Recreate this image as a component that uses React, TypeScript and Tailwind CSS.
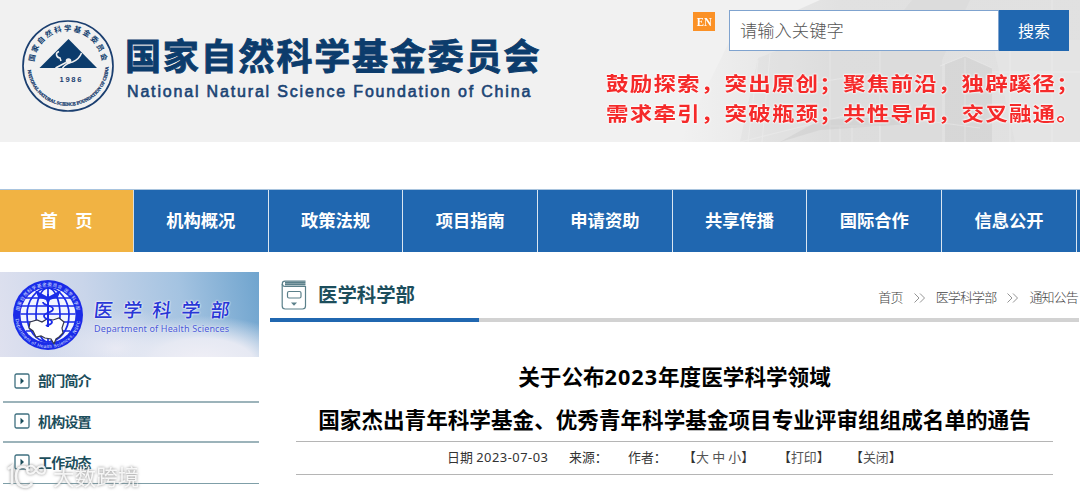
const navItems = ["机构概况", "政策法规", "项目指南", "申请资助", "共享传播", "国际合作", "信息公开"]

const sideItems = ["部门简介", "机构设置", "工作动态"]

const slogans = [
  "鼓励探索，突出原创；聚焦前沿，独辟蹊径；",
  "需求牵引，突破瓶颈；共性导向，交叉融通。",
]

function Emblem() {
  return (
    <svg className="w-[94px] h-[94px] shrink-0 overflow-visible" viewBox="0 0 94 94" fill="none">
      <defs>
        <path id="emblem-top" d="M13 46A34 34 0 0 1 81 46" />
        <path id="emblem-bottom" d="M6.500 49A40.600 40.600 0 0 0 87.500 49" />
      </defs>
      <circle cx="47" cy="47" r="45" stroke="#1b3f70" strokeWidth="1.700" />
      <text fontSize="7.400" fontWeight="700" fill="#0f3d6e" className="font-['Noto_Sans_CJK_SC',sans-serif]">
        <textPath href="#emblem-top" startOffset="3" textLength="100">国家自然科学基金委员会</textPath>
      </text>
      <text
        fontSize="4.600"
        fontWeight="700"
        fill="#1b3f70"
        stroke="#1b3f70"
        strokeWidth=".3"
        className="font-['Liberation_Serif',serif]"
      >
        <textPath href="#emblem-bottom" startOffset="2" textLength="121">
          NATIONAL NATURAL SCIENCE FOUNDATION OF CHINA
        </textPath>
      </text>
      <path d="M47.500 20 76 49H18.500z" fill="#0c3c6c" />
      <path
        d="M38 32.500q-3 1-2.500 3.500t3.500 3l1 3M60.500 34q-2 6-9 9-6 1-10 6M45 43.500 34.500 49"
        stroke="#f1f1f1"
        strokeWidth="1.500"
      />
      <circle cx="47.500" cy="42" r="2.800" fill="#f1f1f1" />
      <text
        x="38.500"
        y="62.500"
        fontSize="7.600"
        fontWeight="700"
        fill="#1b3f70"
        textLength="22"
        className="font-['Liberation_Sans',sans-serif]"
      >
        1986
      </text>
    </svg>
  )
}

function HealthEmblem() {
  return (
    <svg className="w-[72px] h-[72px] shrink-0" viewBox="0 0 72 72" fill="none">
      <defs>
        <path id="health-top" d="M7.300 32A29 29 0 0 1 64.700 32" />
        <path id="health-bottom" d="M3.500 40A32.700 32.700 0 0 0 68.500 40" />
      </defs>
      <circle cx="36" cy="36" r="35" fill="#1a2be8" />
      <circle cx="36" cy="36" r="27.500" fill="#f2f5ff" />
      <g stroke="#1a2be8" strokeWidth="1.700">
        <path d="M14 19H58M9 27H63M8.500 35H63.500M9 43H63M14 52H58M36 8V64" />
        <ellipse cx="36" cy="36" rx="12" ry="27" />
        <ellipse cx="36" cy="36" rx="21" ry="27" />
      </g>
      <path d="M36 18 23 11l3 7 8 3 2 5 2-5 8-3 3-7z" fill="#1a2be8" />
      <path
        d="M18 43l7-2 5 2 5-3 6 1 6-2 5 4-2 6 1 5-4 4-3 2-2 5-3-5-6-1-4-2-5 1-3-6-4-3z"
        fill="#fff"
        stroke="#34384a"
        strokeWidth="1.200"
      />
      <path d="M36 15V48" stroke="#1a2be8" strokeWidth="2" />
      <path
        d="M31 23c0 4 10 3 10 7s-9 3-9 7 8 3 8 6-5 3-6 4"
        stroke="#1a2be8"
        strokeWidth="1.800"
      />
      <text fontSize="4.500" fill="#dfe3ff" className="font-['Noto_Sans_CJK_SC',sans-serif]">
        <textPath href="#health-top" textLength="82">国家自然科学基金委员会 医学科学部</textPath>
      </text>
      <text fontSize="4.600" fill="#dfe3ff" className="font-['Liberation_Sans',sans-serif]">
        <textPath href="#health-bottom" textLength="93">Department of Health Sciences, NSFC</textPath>
      </text>
    </svg>
  )
}

// Faded building behind the right part of the header
function Building() {
  return (
    <svg className="absolute right-0 top-0 w-[400px] h-[142px]" viewBox="0 0 400 142" fill="none">
      <defs>
        <linearGradient id="haze" x1="0" y1="0" x2="1" y2="0">
          <stop offset="0" stopColor="#dadada" stopOpacity="0" />
          <stop offset=".4" stopColor="#dadada" stopOpacity=".7" />
          <stop offset="1" stopColor="#dedede" stopOpacity=".85" />
        </linearGradient>
      </defs>
      <path d="M0 142 50 40 140 0H400V142z" fill="url(#haze)" />
      <path d="M60 142 78 58 150 30 200 48V142z" fill="#cfcfcf" opacity=".2" />
      <path d="M200 142V40L232 0H290L262 60V142z" fill="#d0d0d0" opacity=".25" />
      <path d="M265 64 285 56 312 68V142H265z" fill="#c9c9c9" opacity=".4" />
      <path d="M312 40H400V142H335z" fill="#ececec" opacity=".35" />
      <g stroke="#f2f2f2" opacity=".4">
        <path d="M78 60 68 142M90 54 82 142M150 34V142M200 50V142M285 58V142M330 44V142M372 0V142" />
        <path d="M60 142 180 112 300 128M80 92 200 72M260 66 285 56 312 68M312 72H400" />
        <path d="M150 126H200V142M160 126V142M172 126V142" />
      </g>
      <path d="M100 142 140 120 230 116V124L140 130z" fill="#bfbfbf" opacity=".3" />
    </svg>
  )
}

function Header() {
  return (
    <header className="relative flex h-[142px] justify-between overflow-hidden bg-[#f1f1f1]">
      <Building />
      <div className="relative flex pl-[21px] pt-[19px]">
        <Emblem />
        <div className="ml-[10px] pt-[12px]">
          <h1 className="h-[52px] whitespace-nowrap text-[36px] leading-[52px] font-bold tracking-[1.850px] text-[#0c3c6c] [-webkit-text-stroke:0.900px_#0c3c6c]">
            国家自然科学基金委员会
          </h1>
          <p className="ml-[2px] whitespace-nowrap font-['Liberation_Sans',sans-serif] text-[16px] leading-[18px] tracking-[1.830px] text-[#1b4474] [-webkit-text-stroke:0.600px_#1b4474]">
            National Natural Science Foundation of China
          </p>
        </div>
      </div>
      <div className="relative w-[475px] shrink-0 pt-[10px]">
        <div className="flex justify-end pr-[11px]">
          <a className="mr-[14px] mt-[2px] flex h-[19px] w-[22px] items-center justify-center bg-[#fb9126] text-white">
            <span className="scale-x-90 font-['Liberation_Serif',serif] text-[12px] font-bold">EN</span>
          </a>
          <div className="flex h-[41px] w-[270px] items-center border border-[#7fa3cf] bg-white pl-[10px] text-[17.300px] font-light text-[#555]">
            请输入关键字
          </div>
          <button className="h-[41px] w-[70px] bg-[#2067b0] text-[16px] text-white">搜索</button>
        </div>
        <div className="mt-[18px] pl-[1px]">
          {slogans.map((line) => (
            <p
              key={line}
              className="h-[30px] scale-y-[0.880] whitespace-nowrap text-[22.500px] leading-[30px] font-bold tracking-[1.200px] text-[#f52a2a] [text-shadow:0_0_2px_#fff,0_0_2px_#fff,0_0_3px_#fff]"
            >
              {line}
            </p>
          ))}
        </div>
      </div>
    </header>
  )
}

function Nav() {
  return (
    <nav className="mt-[47px] flex h-[63px] overflow-hidden border-t border-[#a9c4de] bg-[#2067b0] text-[17.300px] font-bold text-white">
      <a className="flex w-[134px] shrink-0 items-center justify-center whitespace-pre border-r border-[#d9dfe0] bg-[#f1b343]">
        首　页
      </a>
      {navItems.map((item) => (
        <a
          key={item}
          className="flex w-[134.700px] shrink-0 items-center justify-center border-r border-[#dbe6f1]"
        >
          {item}
        </a>
      ))}
    </nav>
  )
}

function Sidebar() {
  return (
    <aside className="w-[259px] shrink-0">
      <div className="flex h-[85px] items-center bg-[radial-gradient(ellipse_at_78%_105%,#f0eff6_0%,#e6e9f3_18%,transparent_36%),radial-gradient(ellipse_at_45%_90%,#e9eaf4_0%,transparent_38%),linear-gradient(80deg,#dfe1ef_0%,#c9d5ea_35%,#a4c3e1_70%,#6fa4ce_100%)] pl-[12px]">
        <HealthEmblem />
        <div className="ml-[10px] pt-[2px] text-[#2837d6]">
          <p className="h-[26px] -skew-x-6 whitespace-nowrap text-[19px] leading-[26px] font-medium tracking-[10.200px] [text-shadow:0_0_2px_#fff,0_0_2px_#fff]">
            医学科学部
          </p>
          <p className="whitespace-nowrap font-['Noto_Sans',sans-serif] text-[9px] leading-[12px] tracking-[0.150px] text-[#4a58d8] [text-shadow:0_0_2px_#fff]">
            Department of Health Sciences
          </p>
        </div>
      </div>
      <ul className="ml-[3px] pt-[5px]">
        {sideItems.map((item) => (
          <li
            key={item}
            className="flex h-[40.500px] items-center border-b-2 border-[#9cb3ba] pb-px pl-[11px] text-[14px] font-bold tracking-[-0.800px] text-[#1c4e5c] last:border-b last:border-[#7f9fa8]"
          >
            <svg className="mr-[8px] h-4 w-4" viewBox="0 0 16 16" fill="none">
              <rect x="1" y="1" width="14" height="14" rx="1.500" stroke="#3f7080" strokeWidth="1.300" />
              <path d="M6.500 4.800 10 8l-3.500 3.200z" fill="#1c4e5c" />
            </svg>
            {item}
          </li>
        ))}
      </ul>
    </aside>
  )
}

function Chevrons() {
  return (
    <svg className="mx-[11px] h-3 w-[11px]" viewBox="0 0 11 12" fill="none" stroke="#888" strokeWidth=".9">
      <path d="M.5 1.500 5 6 .5 10.500M6 1.500 10.500 6 6 10.500" />
    </svg>
  )
}

function Main() {
  return (
    <main className="ml-[11px] w-[809px]">
      <div className="flex h-[46px] items-center pl-[11px]">
        <svg className="h-[30px] w-[26px]" viewBox="0 0 26 30" fill="none" stroke="#5b808a" strokeWidth="1.200">
          <path d="M24.500 6.500H4a2.700 2.700 0 0 1 0-5.400H24.500" />
          <path d="M4 2.600H24.500M4 4.600H24.500" strokeWidth="1.800" />
          <path d="M1.200 4V26a3 3 0 0 0 3 3H21.500a3 3 0 0 0 3-3V6" />
          <rect x="6.500" y="11.500" width="13.500" height="6.500" rx="1.500" />
          <path d="M10 22.500h6L13 25.800z" fill="#5b808a" stroke="none" />
        </svg>
        <h2 className="ml-[11px] text-[19.400px] font-bold text-[#1c4e5c]">医学科学部</h2>
        <div className="ml-auto mt-[6px] flex items-center whitespace-nowrap pr-[1px] text-[13px] font-light tracking-[-0.850px] text-[#444]">
          <span>首页</span>
          <Chevrons />
          <span>医学科学部</span>
          <Chevrons />
          <span>通知公告</span>
        </div>
      </div>
      <div className="h-[4px] bg-[#d2d2d2]">
        <div className="h-full w-[209px] bg-[#2067b0]" />
      </div>

      <div className="ml-[26px] w-[757px]">
        <h3 className="border-b border-[#b5b5b5] pt-[33px] text-center text-[21.600px] leading-[43px] font-bold whitespace-nowrap text-black">
          关于公布<span className="tracking-[1px]">2023</span>年度医学科学领域
          <br />
          国家杰出青年科学基金、优秀青年科学基金项目专业评审组组成名单的通告
        </h3>
        <div className="flex h-[33px] items-center whitespace-pre border-b border-[#b5b5b5] pl-[151px] text-[12.900px] text-[#333]">
          <span className="w-[122px]">
            日期 <span className="tracking-[0.500px]">2023-07-03</span>
          </span>
          <span className="w-[59px]">来源：</span>
          <span className="w-[55px]">作者：</span>
          <span className="w-[95px]">
            【<span className="text-[#555]">大 中 小</span>】
          </span>
          <span className="w-[72px]">
            【<span className="text-[#555]">打印</span>】
          </span>
          <span>
            【<span className="text-[#555]">关闭</span>】
          </span>
        </div>
      </div>
    </main>
  )
}

function Watermark() {
  return (
    <div className="absolute left-[7px] top-[462px] flex items-center text-white/85 drop-shadow-[0_0_1.500px_#777]">
      <svg className="h-[28px] w-[42px]" viewBox="0 0 42 28" fill="none" stroke="currentColor" strokeWidth="2.600">
        <path d="M1 6 5 3V21" />
        <path d="M22 8C18 1 9 3 9 13c0 12 12 14 16 7" />
        <path d="M29 7c-3-6-9-5-9 0s6 5 9 0 9-5 9 0-6 5-9 0z" strokeWidth="2" />
      </svg>
      <span className="ml-[4px] text-[21.600px] leading-[30px]">大数跨境</span>
    </div>
  )
}

export default function App() {
  return (
    <div className="relative h-[496px] w-[1080px] overflow-hidden bg-white font-['Noto_Sans','Noto_Sans_CJK_SC',sans-serif]">
      <Header />
      <Nav />
      <div className="mt-[20px] flex">
        <Sidebar />
        <Main />
      </div>
      <Watermark />
    </div>
  )
}
